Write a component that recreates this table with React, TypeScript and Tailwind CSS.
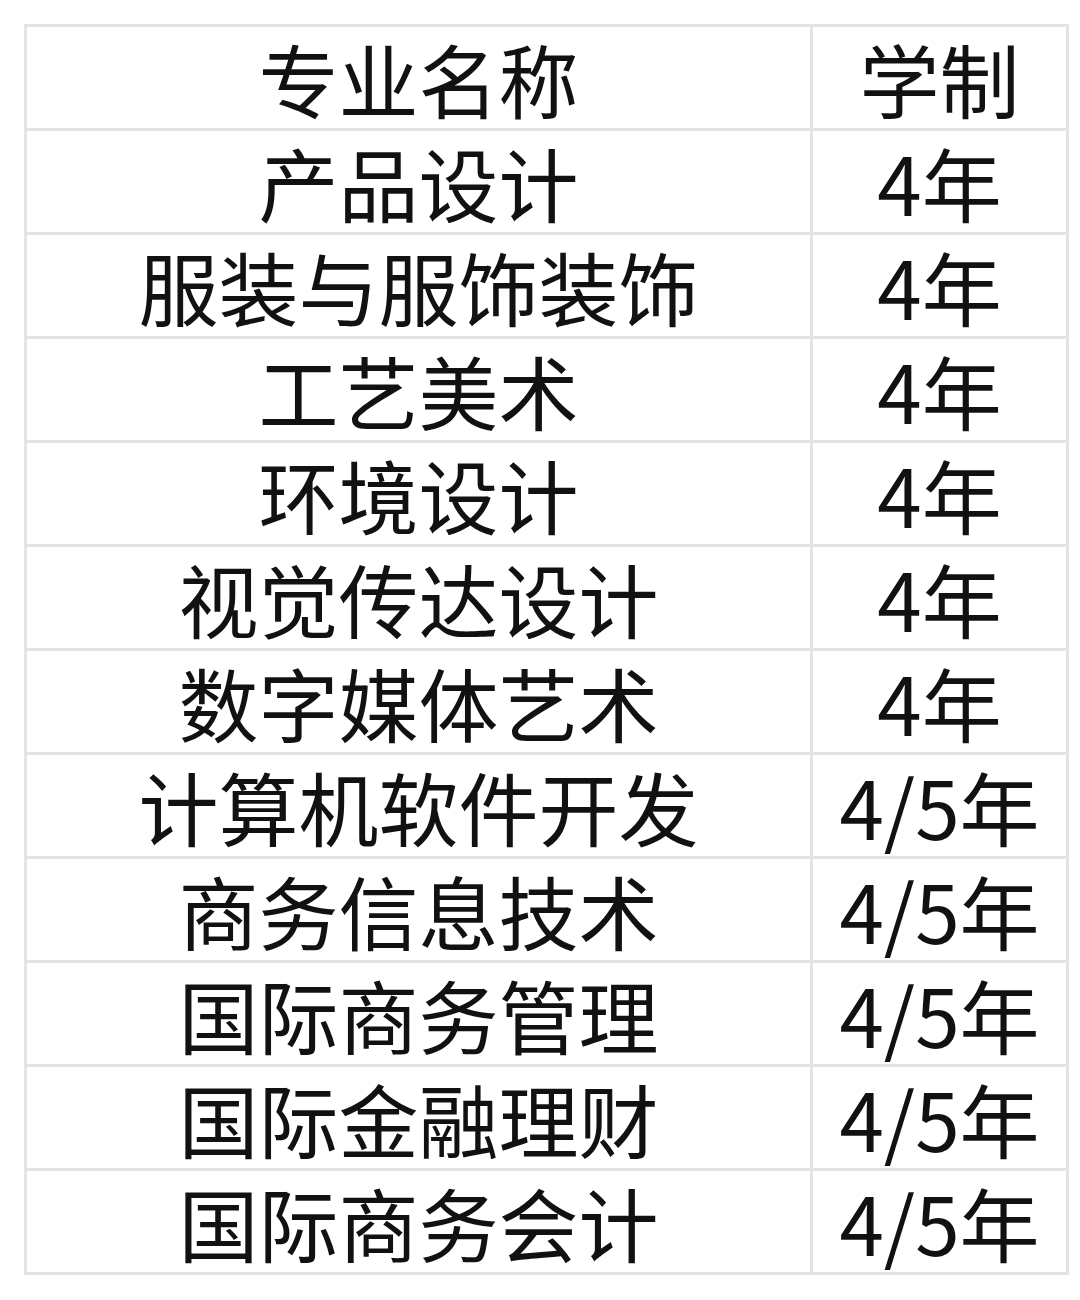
const rows: [string, string][] = [
  ['产品设计', '4年'],
  ['服装与服饰装饰', '4年'],
  ['工艺美术', '4年'],
  ['环境设计', '4年'],
  ['视觉传达设计', '4年'],
  ['数字媒体艺术', '4年'],
  ['计算机软件开发', '4/5年'],
  ['商务信息技术', '4/5年'],
  ['国际商务管理', '4/5年'],
  ['国际金融理财', '4/5年'],
  ['国际商务会计', '4/5年'],
]

export default function App() {
  return (
    <div className="min-h-[1300px] w-[1080px] bg-white pl-[24px] pt-[24px] font-['Noto_Sans_CJK_SC','Noto_Sans',sans-serif] text-[#111]">
      <table className="w-[1042px] table-fixed border-collapse text-[80px] leading-none">
        <colgroup>
          <col className="w-[786px]" />
          <col className="w-[256px]" />
        </colgroup>
        <thead>
          <tr className="h-[104px]">
            <th className="border-[3px] border-[#e4e4e4] pb-[2px] text-center font-normal">专业名称</th>
            <th className="border-[3px] border-[#e4e4e4] pb-[2px] text-center font-normal">学制</th>
          </tr>
        </thead>
        <tbody>
          {rows.map(([name, years]) => (
            <tr key={name} className="h-[104px]">
              <td className="border-[3px] border-[#e4e4e4] pb-[2px] text-center">{name}</td>
              <td className="border-[3px] border-[#e4e4e4] pb-[2px] text-center">{years}</td>
            </tr>
          ))}
        </tbody>
      </table>
    </div>
  )
}
